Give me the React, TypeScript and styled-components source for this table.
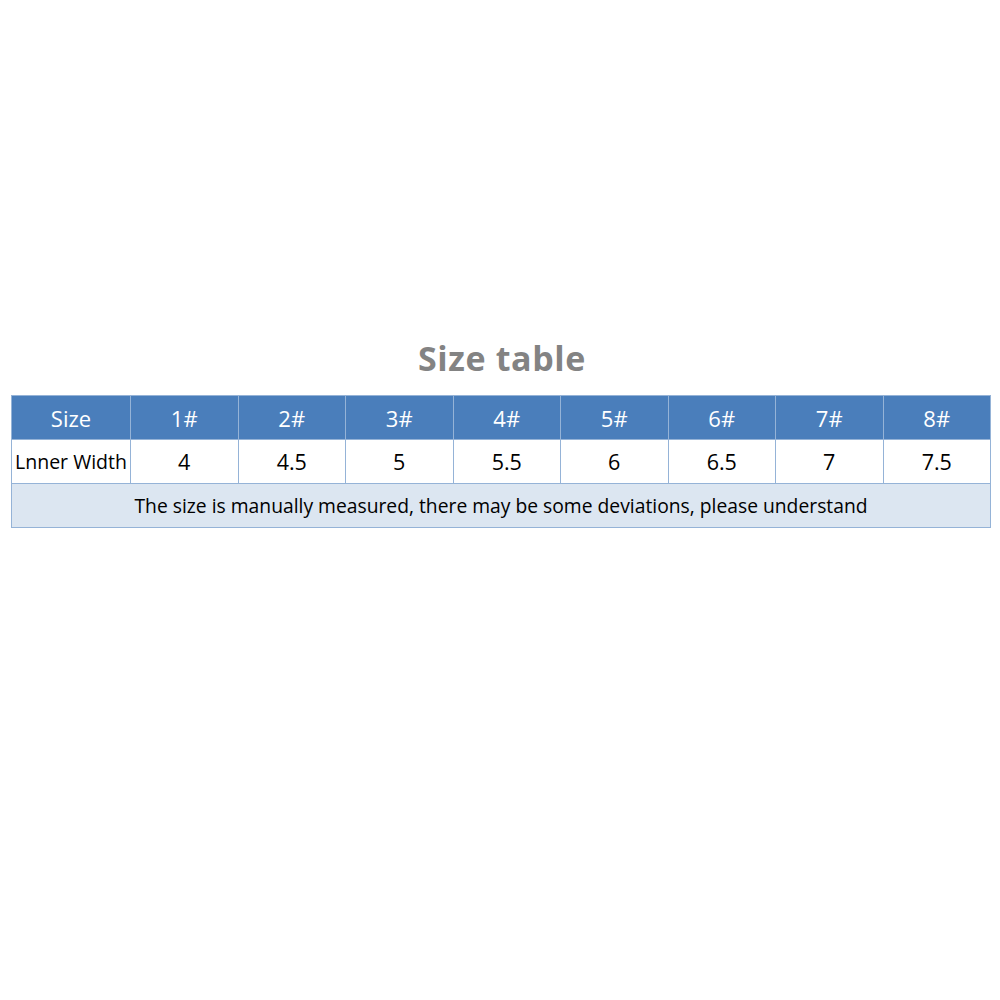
import React from "react";
import styled, { createGlobalStyle } from "styled-components";

const GlobalStyle = createGlobalStyle`
  html, body {
    margin: 0;
    padding: 0;
    background: #fff;
  }
`;

const Page = styled.div`
  width: 1000px;
  height: 1000px;
  display: flex;
  flex-direction: column;
  align-items: center;
  padding-top: 335px;
  box-sizing: border-box;
`;

const Title = styled.h1`
  margin: 0 0 14px 4px;
  font-family: "Open Sans", "DejaVu Sans", sans-serif;
  font-weight: 700;
  font-size: 34px;
  line-height: 46px;
  letter-spacing: 0.6px;
  color: #838383;
`;

const Table = styled.table`
  width: 980px;
  margin-left: 2px;
  border-collapse: collapse;
  table-layout: fixed;
  font-family: "Open Sans", "Noto Sans CJK SC", sans-serif;
`;

const HeadCell = styled.th<{ $first?: boolean }>`
  width: ${(p) => (p.$first ? "118px" : "auto")};
  height: 43px;
  padding: 0;
  background: #4a7ebb;
  color: #fff;
  font-weight: 400;
  font-size: 22px;
  text-align: center;
  border: 1px solid #95b3d7;
`;

const Cell = styled.td<{ $small?: boolean }>`
  height: 43px;
  padding: 0;
  background: #fff;
  color: #000;
  font-size: ${(p) => (p.$small ? "19.5px" : "21.5px")};
  text-align: center;
  border: 1px solid #95b3d7;
  white-space: nowrap;
`;

const NoteCell = styled.td`
  height: 43px;
  padding: 0;
  background: #dce6f1;
  color: #000;
  font-size: 19.3px;
  line-height: 24px;
  text-align: center;
  border: 1px solid #95b3d7;
`;

const sizes = ["1#", "2#", "3#", "4#", "5#", "6#", "7#", "8#"];
const widths = ["4", "4.5", "5", "5.5", "6", "6.5", "7", "7.5"];

const App = () => {
  return (
    <>
      <GlobalStyle />
      <Page>
        <Title>Size table</Title>
        <Table>
          <thead>
            <tr>
              <HeadCell $first>Size</HeadCell>
              {sizes.map((s) => (
                <HeadCell key={s}>{s}</HeadCell>
              ))}
            </tr>
          </thead>
          <tbody>
            <tr>
              <Cell $small>Lnner Width</Cell>
              {widths.map((w) => (
                <Cell key={w}>{w}</Cell>
              ))}
            </tr>
            <tr>
              <NoteCell colSpan={9}>
                The size is manually measured, there may be some deviations, please understand
              </NoteCell>
            </tr>
          </tbody>
        </Table>
      </Page>
    </>
  );
};

export default App;
